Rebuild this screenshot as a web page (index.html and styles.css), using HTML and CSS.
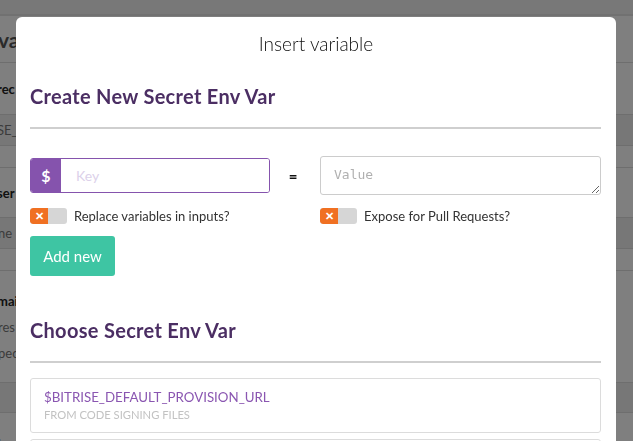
FILE: index.html
```html
<!DOCTYPE html>
<html>
<head>
<meta charset="utf-8">
<link rel="stylesheet" href="styles.css">
</head>
<body>
<div class="page">
  <div class="topbar"></div>
  <div class="row r-title"><span class="bg-title">va</span></div>
  <div class="row r-52"><span class="bg-bold">rec</span></div>
  <div class="row r-31 shade"><span class="bg-mono">SE_</span></div>
  <div class="row r-22"></div>
  <div class="row r-50"><span class="bg-bold">ser</span></div>
  <div class="row r-31 shade"><span class="bg-light">ne</span></div>
  <div class="row r-22"></div>
  <div class="row r-112">
    <span class="bg-bold">mai</span>
    <span class="bg-light">res</span>
    <span class="bg-light">pec</span>
  </div>
  <div class="row r-30 shade"></div>
  <div class="row r-last"><span class="bg-light">ho</span></div>
</div>
<div class="overlay"></div>
<div class="modal">
  <div class="modal-title">Insert variable</div>
  <div class="modal-body">
    <h2 class="section-title">Create New Secret Env Var</h2>
    <div class="form-grid">
      <div class="key-group">
        <span class="addon">$</span>
        <input class="key-input" type="text" placeholder="Key">
      </div>
      <div class="equals">=</div>
      <textarea class="value-input" placeholder="Value"></textarea>
      <label class="toggle-row">
        <span class="toggle"><span class="toggle-x">&#x2715;</span></span>
        <span class="toggle-label">Replace variables in inputs?</span>
      </label>
      <div></div>
      <label class="toggle-row">
        <span class="toggle"><span class="toggle-x">&#x2715;</span></span>
        <span class="toggle-label">Expose for Pull Requests?</span>
      </label>
    </div>
    <button class="add-btn">Add new</button>
    <h2 class="section-title second">Choose Secret Env Var</h2>
    <ul class="var-list">
      <li class="var-item">
        <div class="var-name">$BITRISE_DEFAULT_PROVISION_URL</div>
        <div class="var-source">FROM CODE SIGNING FILES</div>
      </li>
      <li class="var-item">
        <div class="var-name">$BITRISE_DEFAULT_CERTIFICATE_URL</div>
        <div class="var-source">FROM CODE SIGNING FILES</div>
      </li>
    </ul>
  </div>
</div>
</body>
</html>
```
FILE: styles.css
```css
* { box-sizing: border-box; }
html, body {
  margin: 0;
  padding: 0;
  width: 633px;
  height: 441px;
  overflow: hidden;
  font-family: Lato, "Open Sans", sans-serif;
  background: #fff;
}
.page {
  display: flex;
  flex-direction: column;
}
.topbar {
  height: 16px;
  background: #f0f0f0;
  border-bottom: 2px solid #e2e2e2;
}
.row {
  border-bottom: 1px solid #dcdcdc;
  display: flex;
  flex-direction: column;
  justify-content: center;
  color: #333;
  overflow: hidden;
  white-space: nowrap;
}
.shade { background: #efefef; }
.r-title { height: 47px; }
.r-52 { height: 52px; }
.r-31 { height: 31px; }
.r-22 { height: 22px; }
.r-50 { height: 50px; }
.r-30 { height: 30px; }
.r-112 { height: 112px; justify-content: flex-start; padding-top: 22px; gap: 10px; }
.r-last { height: 40px; justify-content: flex-end; }
.bg-title { font-size: 21px; font-weight: 700; color: #555; margin-left: -2px; }
.bg-bold { font-size: 13px; font-weight: 700; color: #222; margin-left: -3px; }
.bg-mono { font-size: 13px; color: #777; margin-left: -3px; }
.bg-light { font-size: 13px; color: #777; margin-left: -2px; }
.overlay {
  position: fixed;
  inset: 0;
  background: rgba(0, 0, 0, 0.5);
}
.modal {
  position: absolute;
  top: 17px;
  left: 16px;
  width: 600px;
  height: 480px;
  background: #fff;
  border-radius: 6px;
  overflow: hidden;
}
.modal-title {
  text-align: center;
  font-size: 19px;
  font-weight: 300;
  color: #111;
  padding-top: 16px;
  line-height: 22px;
  height: 67px;
}
.modal-body {
  padding: 0 15px 0 14px;
}
.section-title {
  margin: 0;
  font-size: 20px;
  letter-spacing: 0.3px;
  font-weight: 700;
  color: #4b2e63;
  line-height: 24px;
  padding-bottom: 19px;
  border-bottom: 2px solid #cfcfcf;
}
.section-title.second {
  margin-top: 42px;
}
.form-grid {
  display: grid;
  grid-template-columns: 240px 50px 1fr;
  align-items: center;
  row-gap: 13px;
  margin-top: 27px;
}
.key-group {
  display: flex;
  height: 35px;
  border: 1px solid #8553ad;
  border-radius: 3px;
  overflow: hidden;
}
.addon {
  width: 30px;
  background: #8553ad;
  color: #fff;
  font-weight: 700;
  font-size: 16px;
  display: flex;
  align-items: center;
  justify-content: center;
}
.key-input {
  flex: 1;
  border: none;
  outline: none;
  font-family: Lato, sans-serif;
  font-size: 14px;
  padding: 0 0 0 15px;
  min-width: 0;
}
.key-input::placeholder { color: #dcd1ea; }
.equals {
  text-align: center;
  font-weight: 900;
  font-size: 15px;
  color: #111;
  padding-right: 4px;
}
.value-input {
  height: 39px;
  border: 1px solid #cccccc;
  border-radius: 3px;
  resize: vertical;
  font-family: "DejaVu Sans Mono", "Liberation Mono", monospace;
  font-size: 13px;
  padding: 10px 13px;
  outline: none;
  display: block;
  width: 100%;
}
.value-input::placeholder { color: #b0b0b0; }
.toggle-row {
  display: flex;
  align-items: center;
  gap: 7px;
  height: 16px;
}
.toggle {
  width: 37px;
  height: 16px;
  border-radius: 3px;
  background: #d6d6d6;
  display: flex;
  overflow: hidden;
}
.toggle-x {
  width: 18px;
  height: 16px;
  background: #f07022;
  color: #fff;
  font-size: 11px;
  font-weight: 900;
  display: flex;
  align-items: center;
  justify-content: center;
  border-radius: 3px 0 0 3px;
}
.toggle-label {
  font-size: 13px;
  color: #333;
}
.add-btn {
  margin-top: 12px;
  width: 85px;
  height: 40px;
  border: none;
  border-radius: 3px;
  background: #3ec5a3;
  color: #fff;
  font-family: Lato, sans-serif;
  font-size: 15px;
  padding: 0;
  display: block;
}
.var-list {
  list-style: none;
  margin: 15px 0 0;
  padding: 0;
  display: flex;
  flex-direction: column;
  gap: 6px;
}
.var-item {
  border: 1px solid #dcdcdc;
  border-radius: 3px;
  height: 55px;
  padding: 10px 13px 0;
}
.var-name {
  font-size: 13.3px;
  color: #8a56b1;
  line-height: 16px;
}
.var-source {
  font-size: 11.2px;
  color: #c2c2c2;
  line-height: 14px;
  margin-top: 3px;
}
```
